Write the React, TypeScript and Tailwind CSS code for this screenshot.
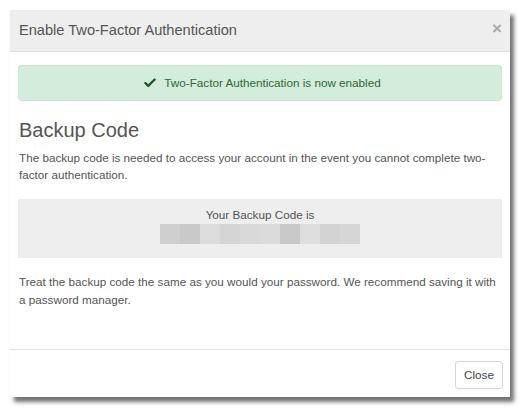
import { Check } from "lucide-react";

const codeBlocks = [
  "bg-[#cfcfcf]",
  "bg-[#c9c9c9]",
  "bg-[#dcdcdc]",
  "bg-[#d5d5d5]",
  "bg-[#d9d9d9]",
  "bg-[#dbdbdb]",
  "bg-[#c8c8c8]",
  "bg-[#dedede]",
  "bg-[#d3d3d3]",
  "bg-[#d6d6d6]",
];

export default function App() {
  return (
    <div className="w-[521px] h-[408px] bg-white p-[10px] font-['Liberation_Sans',Arial,sans-serif] text-[#555]">
      <div className="flex h-[387px] w-[500px] flex-col bg-white shadow-[4px_5px_4px_rgba(0,0,0,0.55)]">
        {/* Header */}
        <div className="flex h-[42px] items-center justify-between border-b border-[#e2e2e2] bg-[#eeeeee] pl-[9px] pr-[8px]">
          <h4 className="text-[14.6px] text-[#555]">Enable Two-Factor Authentication</h4>
          <span className="-mt-[4px] text-[17px] font-bold leading-none text-[#a8a8a8]">×</span>
        </div>

        {/* Body */}
        <div className="flex-1 px-[8px] pt-[13px]">
          <div className="flex h-[36px] items-center justify-center gap-[7px] rounded-[3px] border border-[#c9e6cf] bg-[#d4ecdb] pl-[4px] text-[11.7px] text-[#2a6a36]">
            <Check className="h-[14px] w-[14px] text-[#1f5a2a]" strokeWidth={4} />
            <span>Two-Factor Authentication is now enabled</span>
          </div>

          <h3 className="mt-[16px] pl-[1px] text-[20px] leading-[26px] text-[#555]">Backup Code</h3>
          <p className="mt-[6px] pl-[1px] text-[11.7px] leading-[17px]">
            The backup code is needed to access your account in the event you cannot complete two-factor authentication.
          </p>

          <div className="mt-[16px] flex h-[59px] flex-col items-center bg-[#eeeeee] pt-[8px]">
            <div className="text-[11.7px] leading-[16px]">Your Backup Code is</div>
            <div className="mt-[1px] flex h-[20px]">
              {codeBlocks.map((c, i) => (
                <div key={i} className={`h-[20px] w-[20px] ${c}`} />
              ))}
            </div>
          </div>

          <p className="mt-[15px] pl-[1px] text-[11.7px] leading-[17.5px]">
            Treat the backup code the same as you would your password. We recommend saving it with a password manager.
          </p>
        </div>

        {/* Footer */}
        <div className="flex h-[48px] items-start justify-end border-t border-[#e5e5e5] pr-[7px] pt-[11px]">
          <button className="h-[28px] w-[48px] rounded-[3px] border border-[#d6d6d6] bg-white text-[11.7px] text-[#444]">
            Close
          </button>
        </div>
      </div>
    </div>
  );
}
